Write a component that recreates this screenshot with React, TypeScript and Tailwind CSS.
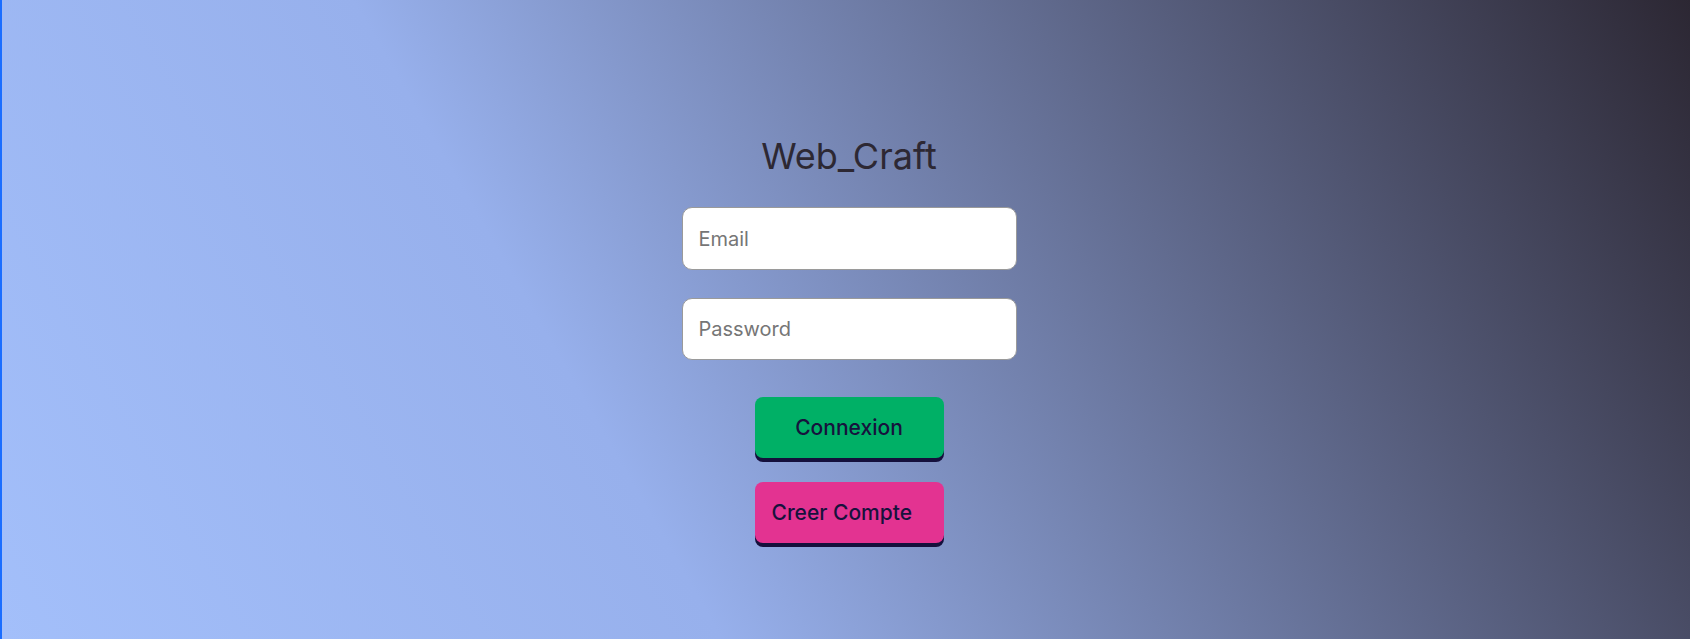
import React from 'react';

const font = { fontFamily: 'Inter, "Open Sans", sans-serif' };

const App: React.FC = () => {
  return (
    <div
      className="min-h-screen w-full border-l-2 border-[#1a6dff] bg-[linear-gradient(60deg,#a3bffa_0%,#97b0ec_35%,#2c2733_100%)] pl-[6px]"
      style={font}
    >
      <div className="flex flex-col items-center pt-[134px]">
        <h1 className="text-[36px] leading-[44px] font-normal text-[#2d2833]">Web_Craft</h1>

        {/* Login form */}
        <input
          type="email"
          placeholder="Email"
          className="mt-[29px] h-[63px] w-[335px] rounded-[10px] border border-[#9a9a9a] bg-white px-[16px] text-[20px] text-[#333] placeholder:text-[#767676] outline-none"
        />
        <input
          type="password"
          placeholder="Password"
          className="mt-[28px] h-[62px] w-[335px] rounded-[10px] border border-[#9a9a9a] bg-white px-[16px] text-[20px] text-[#333] placeholder:text-[#767676] outline-none"
        />

        <button className="mt-[37px] flex h-[61px] w-[189px] items-center justify-center rounded-[8px] bg-[#00b066] text-[21px] font-medium text-[#17123d] shadow-[0_4px_0_#15103c]">
          Connexion
        </button>
        <button className="mt-[24px] flex h-[61px] w-[189px] items-center justify-start rounded-[8px] bg-[#e33391] pl-[17px] text-[21px] font-medium text-[#17123d] shadow-[0_4px_0_#15103c]">
          Creer Compte
        </button>
      </div>
    </div>
  );
};

export default App;
